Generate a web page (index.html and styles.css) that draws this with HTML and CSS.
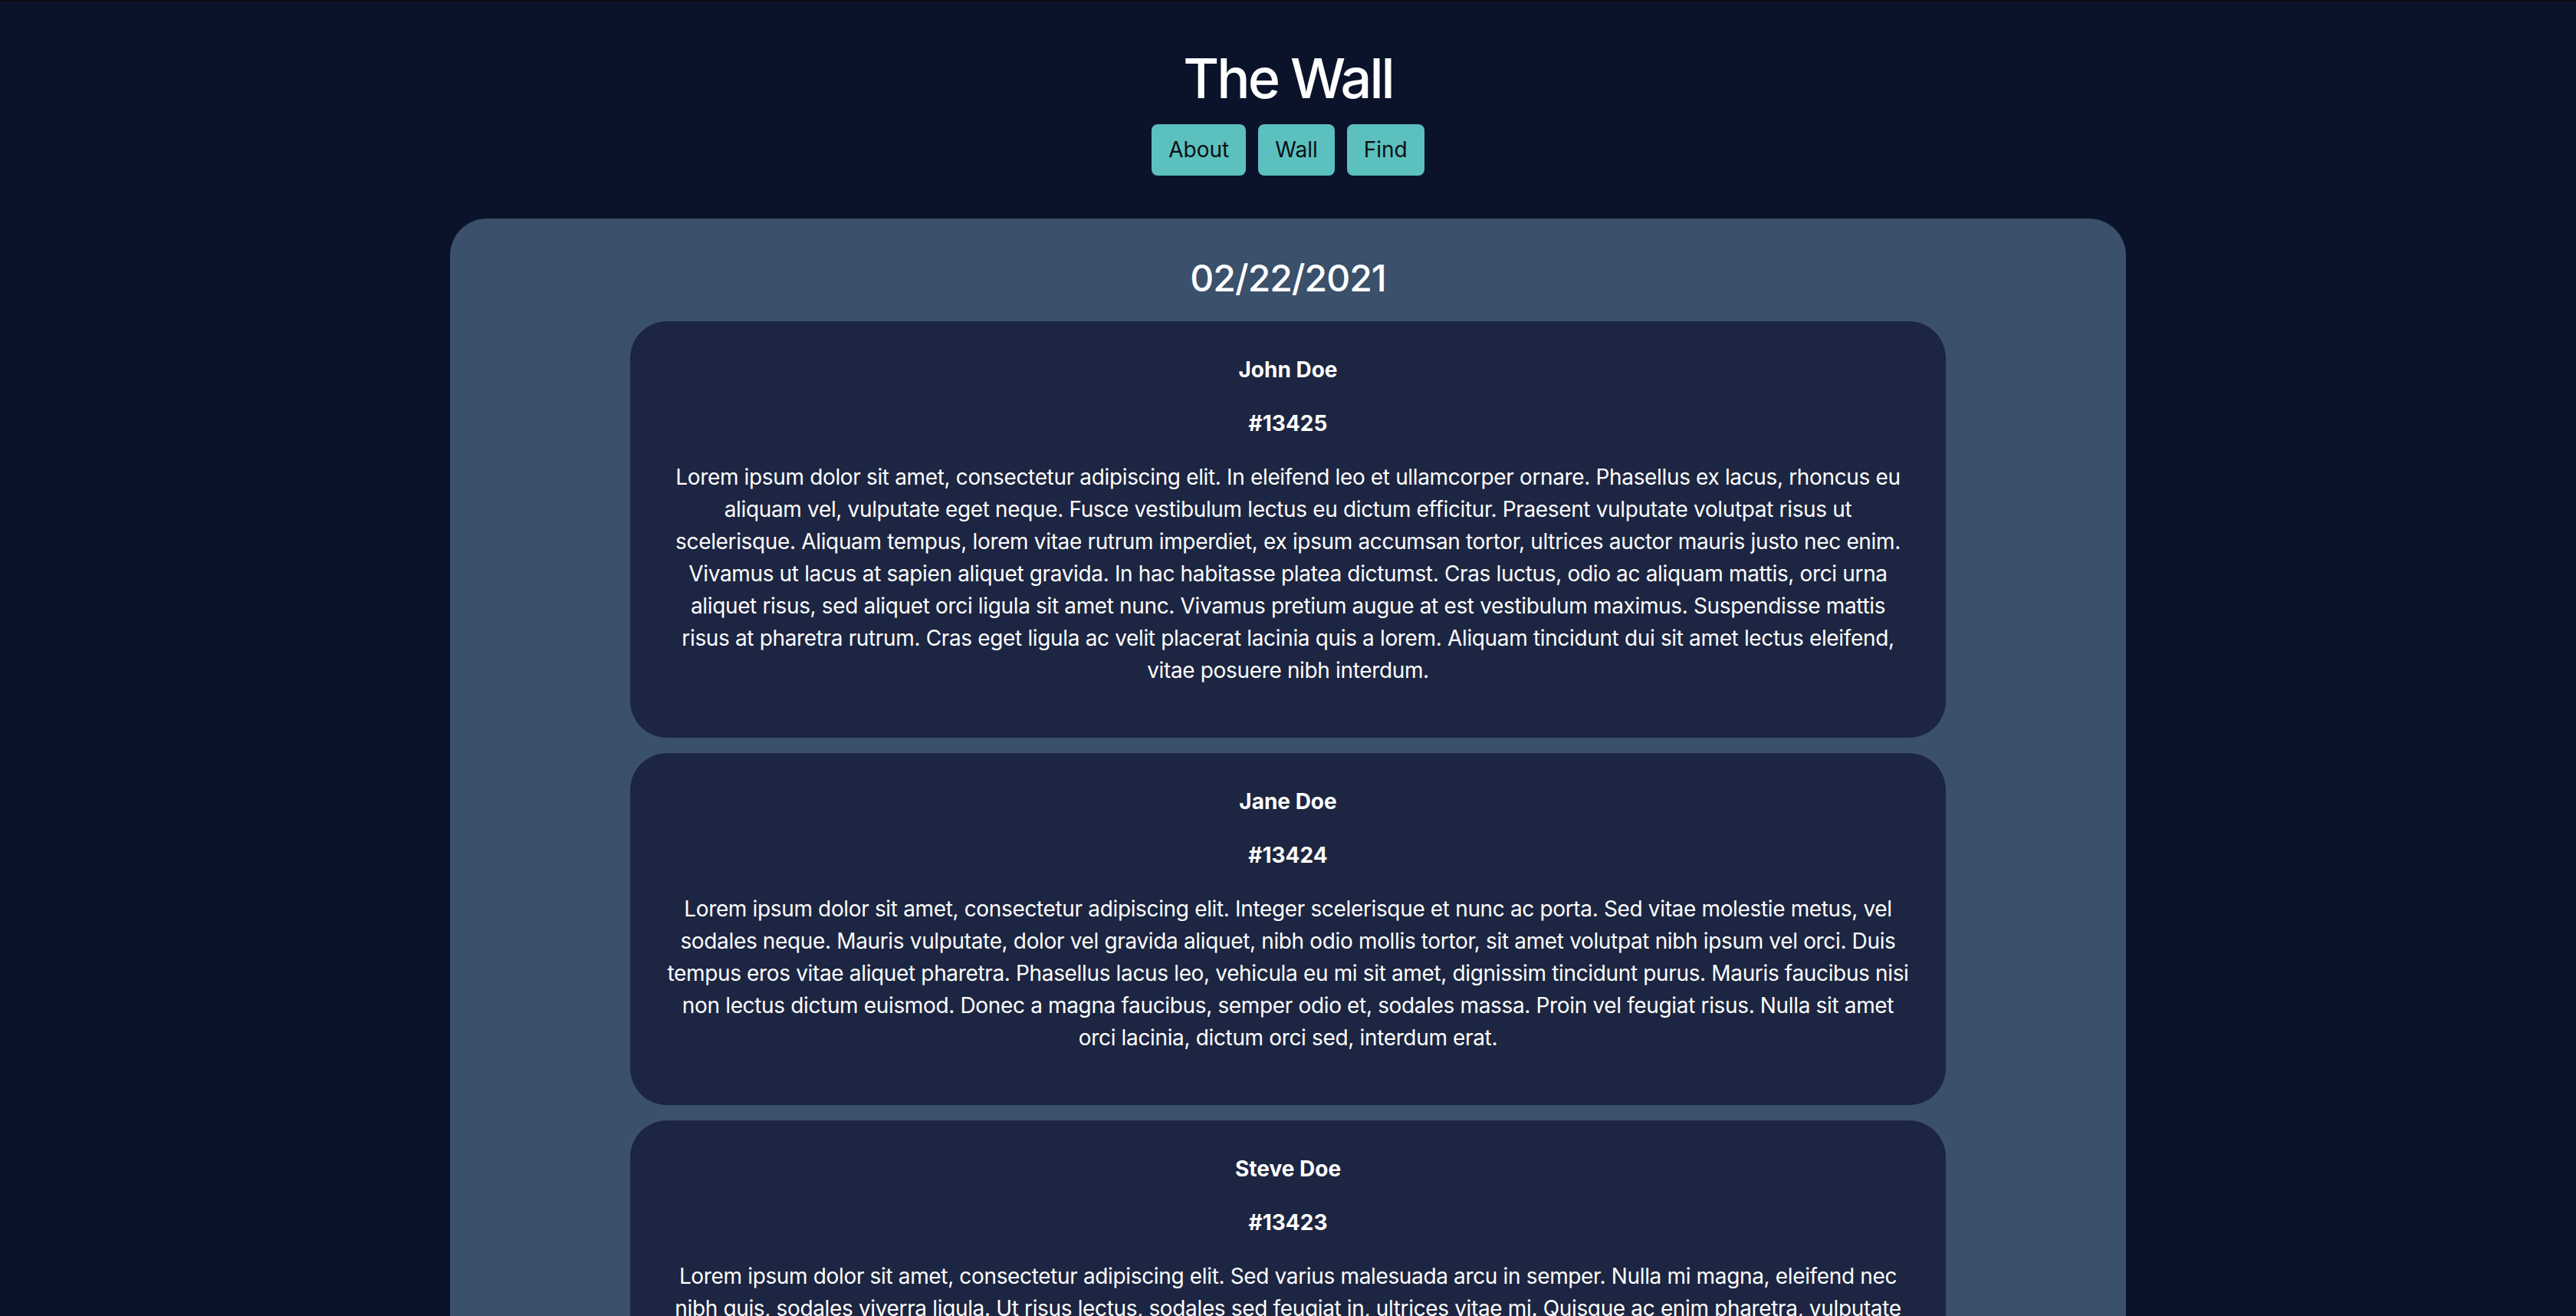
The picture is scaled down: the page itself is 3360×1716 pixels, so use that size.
FILE: index.html
```html
<!DOCTYPE html>
<html lang="en">
<head>
<meta charset="utf-8">
<title>The Wall</title>
<link rel="stylesheet" href="styles.css">
</head>
<body>
<div class="page">
  <header class="header">
    <h1 class="title">The Wall</h1>
    <nav class="nav">
      <button class="nav-btn">About</button>
      <button class="nav-btn">Wall</button>
      <button class="nav-btn">Find</button>
    </nav>
  </header>
  <main class="wall">
    <h2 class="date">02/22/2021</h2>
    <article class="post">
      <p class="post-name">John Doe</p>
      <p class="post-id">#13425</p>
      <p class="post-body">Lorem ipsum dolor sit amet, consectetur adipiscing elit. In eleifend leo et ullamcorper ornare. Phasellus ex lacus, rhoncus eu aliquam vel, vulputate eget neque. Fusce vestibulum lectus eu dictum efficitur. Praesent vulputate volutpat risus ut scelerisque. Aliquam tempus, lorem vitae rutrum imperdiet, ex ipsum accumsan tortor, ultrices auctor mauris justo nec enim. Vivamus ut lacus at sapien aliquet gravida. In hac habitasse platea dictumst. Cras luctus, odio ac aliquam mattis, orci urna aliquet risus, sed aliquet orci ligula sit amet nunc. Vivamus pretium augue at est vestibulum maximus. Suspendisse mattis risus at pharetra rutrum. Cras eget ligula ac velit placerat lacinia quis a lorem. Aliquam tincidunt dui sit amet lectus eleifend, vitae posuere nibh interdum.</p>
    </article>
    <article class="post">
      <p class="post-name">Jane Doe</p>
      <p class="post-id">#13424</p>
      <p class="post-body">Lorem ipsum dolor sit amet, consectetur adipiscing elit. Integer scelerisque et nunc ac porta. Sed vitae molestie metus, vel sodales neque. Mauris vulputate, dolor vel gravida aliquet, nibh odio mollis tortor, sit amet volutpat nibh ipsum vel orci. Duis tempus eros vitae aliquet pharetra. Phasellus lacus leo, vehicula eu mi sit amet, dignissim tincidunt purus. Mauris faucibus nisi non lectus dictum euismod. Donec a magna faucibus, semper odio et, sodales massa. Proin vel feugiat risus. Nulla sit amet orci lacinia, dictum orci sed, interdum erat.</p>
    </article>
    <article class="post">
      <p class="post-name">Steve Doe</p>
      <p class="post-id">#13423</p>
      <p class="post-body">Lorem ipsum dolor sit amet, consectetur adipiscing elit. Sed varius malesuada arcu in semper. Nulla mi magna, eleifend nec nibh quis, sodales viverra ligula. Ut risus lectus, sodales sed feugiat in, ultrices vitae mi. Quisque ac enim pharetra, vulputate nisl at, tincidunt lorem. Aenean vel magna sed justo lacinia pretium. Nam ultricies nibh at dui commodo, in tincidunt lectus mattis. Etiam non dictum enim, sed condimentum nulla.</p>
    </article>
  </main>
</div>
</body>
</html>
```

FILE: styles.css
```css
html, body {
  margin: 0;
  padding: 0;
}

body {
  background: #0b132b;
  color: #ffffff;
  font-family: Inter, "Noto Sans", "Liberation Sans", sans-serif;
  border-top: 2px solid #0b0b0d;
}

.page {
  display: flex;
  flex-direction: column;
  align-items: center;
}

.header {
  display: flex;
  flex-direction: column;
  align-items: center;
  padding-top: 57px;
}

.title {
  margin: 0 0 17px;
  font-size: 72px;
  line-height: 86px;
  font-weight: 500;
  letter-spacing: -3px;
}

.nav {
  display: flex;
  gap: 16px;
}

.nav-btn {
  background: #5bc0be;
  color: #0b0f14;
  border: none;
  border-radius: 8px;
  font-family: Inter, "Noto Sans", "Liberation Sans", sans-serif;
  font-size: 28px;
  line-height: 35px;
  padding: 16px 22px;
  height: 67px;
}

.wall {
  margin-top: 56px;
  width: 2186px;
  box-sizing: border-box;
  background: #3a506b;
  border-radius: 48px;
  padding: 42px 0 0;
  display: flex;
  flex-direction: column;
  align-items: center;
  gap: 20px;
}

.date {
  margin: 0;
  font-size: 48px;
  line-height: 72px;
  font-weight: 500;
  letter-spacing: -1px;
}

.post {
  width: 1716px;
  box-sizing: border-box;
  background: #1c2541;
  border-radius: 48px;
  padding: 14px 45px 39px;
  text-align: center;
  font-size: 28px;
  line-height: 42px;
}

.post p {
  margin: 28px 0;
}

.post-name,
.post-id {
  font-weight: 700;
}

.post-body {
  font-weight: 400;
  letter-spacing: -0.35px;
}
```
